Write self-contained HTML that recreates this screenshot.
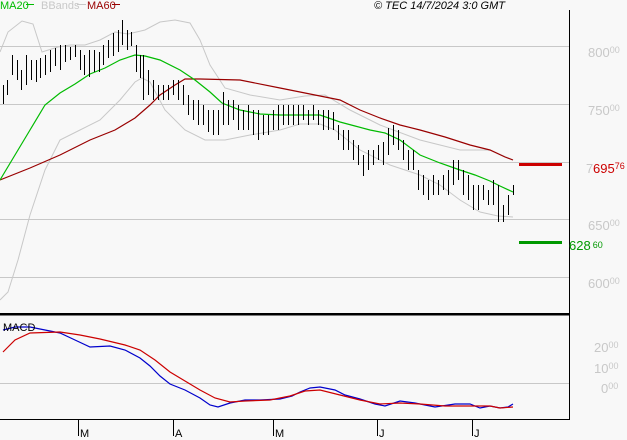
<!DOCTYPE html>
<html><head><meta charset="utf-8"><style>
html,body{margin:0;padding:0;background:#f8f8f8;width:627px;height:440px;overflow:hidden}
svg{display:block}
text{font-family:"Liberation Sans",sans-serif}
</style></head><body>
<svg width="627" height="440" viewBox="0 0 627 440" xmlns="http://www.w3.org/2000/svg">
<rect width="627" height="440" fill="#f8f8f8"/>
<g stroke="#c8c8c8" stroke-width="1">
<path d="M0 46.5H569M0 104.5H569M0 162.5H569M0 219.5H569M0 277.5H569M0 383.5H569"/>
</g>
<g fill="none" stroke="#c8c8c8" stroke-width="1">
<polyline points="0,52 8,32 22,21 33,24 42,52 58,47 70,45 85,45 100,40 115,32 128,34 145,30 160,22 175,20 190,23 200,40 210,65 225,88 250,95 280,100 305,96 325,95 350,110 380,125 420,140 460,150 490,150 513,160"/>
<polyline points="0,300 8,292 18,260 30,215 45,170 60,140 80,130 100,120 120,100 135,82 142,78 150,82 165,110 185,130 205,140 225,140 250,135 280,130 300,124 320,124 335,130 360,150 390,165 420,175 440,185 460,200 480,212 498,216 513,217"/>
</g>
<polyline fill="none" stroke="#990000" stroke-width="1.2" points="0,180 30,168 60,155 90,140 115,130 135,118 150,105 160,95 175,85 185,79 200,79 240,80 280,88 320,96 340,100 360,110 380,118 400,125 420,130 445,137 470,145 490,150 505,157 513,160"/>
<polyline fill="none" stroke="#00bb00" stroke-width="1.2" points="0,180 15,155 30,130 45,105 60,93 75,84 90,74 105,68 120,60 135,55 145,56 160,60 180,70 195,80 210,92 222,103 240,110 260,114 280,115 300,115 320,115 340,122 355,126 370,130 385,133 400,140 420,155 440,163 460,170 475,175 490,181 500,186 513,192"/>
<path fill="none" stroke="#000" stroke-width="1" shape-rendering="crispEdges" d="M3.5 85V104M7.5 80V95M12.5 55V75M17.5 60V80M21.5 70V90M26.5 55V85M31.5 60V80M36.5 60V82M40.5 58V78M45.5 55V75M50.5 50V72M55.5 48V66M60.5 45V70M65.5 45V62M70.5 47V60M75.5 45V57M80.5 50V70M84.5 55V75M89.5 50V77M94.5 50V72M99.5 52V72M103.5 45V65M108.5 40V58M113.5 33V56M118.5 30V52M122.5 20V45M127.5 30V50M131.5 32V46M136.5 45V72M140.5 55V78M143.5 55V100M148.5 70V95M153.5 80V100M158.5 85V100M163.5 85V100M168.5 85V100M173.5 80V95M178.5 80V100M183.5 85V105M188.5 95V115M193.5 100V120M198.5 100V125M203.5 105V125M208.5 110V132M213.5 110V135M218.5 110V135M223.5 92V125M228.5 100V125M233.5 100V120M238.5 105V130M243.5 110V130M248.5 105V130M253.5 110V135M258.5 110V140M263.5 115V135M268.5 115V135M273.5 110V130M278.5 105V130M283.5 105V125M288.5 105V125M293.5 105V125M298.5 105V125M303.5 105V120M308.5 110V125M313.5 105V120M318.5 110V125M323.5 110V130M328.5 110V130M333.5 112V130M338.5 125V140M343.5 130V150M348.5 130V150M353.5 140V160M358.5 145V165M363.5 155V176M368.5 150V170M373.5 150V165M378.5 145V160M383.5 142V165M388.5 128V155M393.5 125V145M398.5 130V150M403.5 140V160M408.5 150V170M413.5 150V170M418.5 170V190M423.5 175V195M428.5 180V200M433.5 175V195M438.5 180V195M443.5 175V190M448.5 170V195M453.5 160V185M458.5 160V180M463.5 170V195M468.5 175V200M473.5 185V210M478.5 185V210M483.5 185V200M488.5 190V205M493.5 180V205M498.5 185V222M503.5 205V222M508.5 195V215M513.5 185V195"/>
<rect x="519" y="163" width="43" height="3" fill="#cc0000"/>
<rect x="519" y="241" width="43" height="3" fill="#009900"/>
<path d="M569.5 10V419.5H0" fill="none" stroke="#000" stroke-width="1"/>
<rect x="0" y="313" width="570" height="2.5" fill="#000"/>
<polyline fill="none" stroke="#0000cc" stroke-width="1.2" points="3,330 15,327 30,327 45,330 60,333 75,340 90,347 110,346 125,350 140,358 150,366 160,376 170,384 185,390 200,398 210,405 218,407 230,403 245,400 260,400 280,399 292,396 300,392 310,388 320,387 335,390 345,395 360,399 375,404 385,406 400,401 415,403 435,407 455,404 470,404 480,408 490,406 500,408 508,407 513,404"/>
<polyline fill="none" stroke="#cc0000" stroke-width="1.2" points="3,352 15,340 30,333 60,332 80,335 100,339 125,345 140,350 155,360 170,372 185,381 200,390 215,398 230,402 245,401 270,400 290,396 305,391 320,390 340,395 360,400 380,404 400,403 420,404 445,406 470,406 490,406 500,408 513,407"/>
<text x="3" y="331" font-size="11" fill="#000">MACD</text>
<path d="M78.5 419V436M173.5 419V436M273.5 419V436M377.5 419V436M472.5 419V436" stroke="#000"/>
<g font-size="11" fill="#000">
<text x="80" y="437">M</text><text x="175" y="437">A</text><text x="275" y="437">M</text><text x="379" y="437">J</text><text x="474" y="437">J</text>
</g>
<g font-size="11">
<text x="0" y="9" fill="#00bb00">MA20</text>
<path d="M26 4.5H34" stroke="#00bb00"/>
<text x="41" y="9" fill="#c8c8c8">BBands</text>
<path d="M77 4.5H86" stroke="#c8c8c8"/>
<text x="87" y="9" fill="#990000">MA60</text>
<path d="M112 4.5H120" stroke="#990000"/>
<text x="374" y="9" fill="#000" font-style="italic">© TEC 14/7/2024 3:0 GMT</text>
</g>
<g font-size="13" fill="#c8c8c8">
<text x="588" y="57">800<tspan font-size="9" dy="-4">00</tspan></text>
<text x="588" y="115">750<tspan font-size="9" dy="-4">00</tspan></text>
<text x="586" y="173">7</text>
<text x="588" y="230">650<tspan font-size="9" dy="-4">00</tspan></text>
<text x="588" y="288">600<tspan font-size="9" dy="-4">00</tspan></text>
<text x="594" y="352">20<tspan font-size="9" dy="-4">00</tspan></text>
<text x="594" y="373">10<tspan font-size="9" dy="-4">00</tspan></text>
<text x="601" y="393">0<tspan font-size="9" dy="-4">00</tspan></text>
</g>
<text x="593" y="173" font-size="13" fill="#cc0000">695<tspan font-size="9" dy="-4">76</tspan></text>
<text x="569" y="250" font-size="13" fill="#009900">628<tspan font-size="9" dx="2" dy="-2">60</tspan></text>
</svg>
</body></html>
